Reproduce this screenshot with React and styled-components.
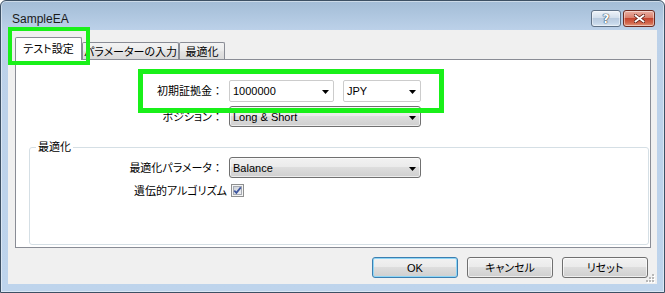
import styled, { createGlobalStyle } from "styled-components";

const GlobalStyle = createGlobalStyle`
  html, body {
    margin: 0;
    padding: 0;
    background: #ffffff;
  }
  body {
    font-family: "Liberation Sans", "Noto Sans CJK JP", sans-serif;
    font-size: 11px;
    color: #000;
  }
  * {
    box-sizing: border-box;
  }
`;

const Window = styled.div`
  position: relative;
  width: 665px;
  height: 293px;
  border: 1px solid #3d5064;
  border-radius: 6px 6px 0 0;
  background: linear-gradient(
    to bottom,
    #a3bcd6 0px,
    #adc5de 12px,
    #bcd1e9 29px,
    #bed4ec 100%
  );
  box-shadow: inset 0 0 0 1px rgba(255, 255, 255, 0.45);
  display: flex;
  flex-direction: column;
  overflow: hidden;
`;

const TitleBar = styled.div`
  height: 29px;
  flex: none;
  display: flex;
  align-items: flex-start;
  padding: 0 9px 0 11px;
`;

const Title = styled.div`
  flex: 1;
  margin-top: 11px;
  font-size: 12px;
  line-height: 14px;
  color: #1b1b1b;
`;

const CaptionButtons = styled.div`
  display: flex;
  gap: 2px;
  margin-top: 9px;
`;

const CaptionButton = styled.div`
  width: ${(p) => p.$width}px;
  height: 17px;
  border: 1px solid ${(p) => (p.$close ? "#6b2b22" : "#5f7186")};
  border-radius: 3px;
  display: flex;
  align-items: center;
  justify-content: center;
  background: ${(p) =>
    p.$close
      ? "linear-gradient(to bottom, #eab0a3 0%, #d9806d 45%, #c5452f 50%, #d2664c 80%, #e39a7e 100%)"
      : "linear-gradient(to bottom, #eef3f9 0%, #d3dfec 45%, #b9cbdf 50%, #c5d6e9 80%, #d9e6f3 100%)"};
  box-shadow: inset 0 0 0 1px rgba(255, 255, 255, 0.45);
`;

const HelpGlyph = styled.span`
  font-family: "DejaVu Sans", sans-serif;
  font-weight: bold;
  font-size: 12px;
  line-height: 12px;
  color: #ffffff;
  text-shadow: 0 0 1px #2f4052, 0 0 1px #2f4052, 0 0 1px #2f4052;
`;

const Client = styled.div`
  position: relative;
  flex: 1;
  margin: 0 7px 8px;
  background: #f0f0f0;
  display: flex;
  flex-direction: column;
  padding: 7px 6px 6px 7px;
`;

const TabStrip = styled.div`
  position: relative;
  z-index: 1;
  height: 22px;
  flex: none;
  display: flex;
  align-items: flex-end;
`;

const Tab = styled.div`
  width: ${(p) => p.$width}px;
  height: ${(p) => (p.$active ? 23 : 17)}px;
  margin-bottom: ${(p) => (p.$active ? -1 : 0)}px;
  border: 1px solid #898c95;
  border-bottom: none;
  border-radius: 2px 2px 0 0;
  background: ${(p) =>
    p.$active
      ? "#ffffff"
      : "linear-gradient(to bottom, #f3f3f3 0%, #ececec 45%, #e2e2e2 55%, #dadada 100%)"};
  display: flex;
  align-items: center;
  justify-content: center;
  white-space: nowrap;
  font-feature-settings: "palt";
  line-height: 14px;
  padding-top: ${(p) => (p.$active ? 0 : 1)}px;
`;

const Panel = styled.div`
  height: 189px;
  flex: none;
  border: 1px solid #898c95;
  background: #ffffff;
  display: flex;
  flex-direction: column;
  padding-top: 20px;
`;

const Row = styled.div`
  display: flex;
  align-items: center;
  gap: ${(p) => p.$gap ?? 6}px;
  height: ${(p) => p.$h}px;
  margin-top: ${(p) => p.$mt || 0}px;
  flex: none;
`;

const Label = styled.div`
  width: ${(p) => p.$w}px;
  flex: none;
  text-align: right;
  white-space: nowrap;
  font-feature-settings: "palt";
  line-height: 14px;
`;

const Colon = styled.span`
  font-feature-settings: normal;
`;

const Combo = styled.div`
  width: ${(p) => p.$w}px;
  height: ${(p) => p.$h}px;
  margin-left: ${(p) => p.$ml || 0}px;
  flex: none;
  display: flex;
  align-items: center;
  justify-content: space-between;
  padding: 0 4px 0 3px;
  border: 1px solid ${(p) => (p.$flat ? "#cccccc" : "#707070")};
  border-radius: ${(p) => (p.$flat ? 2 : 3)}px;
  background: ${(p) =>
    p.$flat
      ? "#ffffff"
      : "linear-gradient(to bottom, #f2f2f2 0%, #ebebeb 45%, #dddddd 50%, #cfcfcf 100%)"};
  box-shadow: ${(p) =>
    p.$flat ? "none" : "inset 0 0 0 1px rgba(255, 255, 255, 0.6)"};
  line-height: 14px;
`;

const Arrow = styled.svg`
  flex: none;
  margin-top: 2px;
`;

const GroupBox = styled.fieldset`
  flex: 1;
  min-width: 0;
  margin: 13px 1px 2px 13px;
  padding: 3px 0 0;
  border: 1px solid #d5dfe5;
  border-radius: 3px;
  display: flex;
  flex-direction: column;
`;

const Legend = styled.legend`
  margin-left: 6px;
  padding: 0 2px;
  line-height: 14px;
  font-size: 11px;
  font-feature-settings: "palt";
`;

const CheckBox = styled.svg`
  flex: none;
  display: block;
`;

const ButtonRow = styled.div`
  flex: none;
  display: flex;
  justify-content: flex-end;
  gap: 9px;
  margin-top: 9px;
  padding-right: 3px;
`;

const Button = styled.div`
  width: 86px;
  height: 21px;
  border: 1px solid ${(p) => (p.$default ? "#3c7fb1" : "#707070")};
  border-radius: 3px;
  background: linear-gradient(
    to bottom,
    #f2f2f2 0%,
    #ebebeb 45%,
    #dddddd 50%,
    #cfcfcf 100%
  );
  box-shadow: ${(p) =>
    p.$default
      ? "inset 0 0 0 1px #8fd6f6"
      : "inset 0 0 0 1px rgba(255, 255, 255, 0.65)"};
  display: flex;
  align-items: center;
  justify-content: center;
  font-feature-settings: "palt";
  line-height: 14px;
`;

const Grip = styled.svg`
  position: absolute;
  right: 2px;
  bottom: 1px;
`;

const Highlight = styled.div`
  position: absolute;
  left: ${(p) => p.$x}px;
  top: ${(p) => p.$y}px;
  width: ${(p) => p.$w}px;
  height: ${(p) => p.$h}px;
  border: ${(p) => p.$t}px solid #19f019;
  pointer-events: none;
  z-index: 5;
`;

const DownArrow = () => (
  <Arrow width="7" height="4" viewBox="0 0 7 4">
    <polygon points="0,0 7,0 3.5,4" fill="#000" />
  </Arrow>
);

const Combobox = ({ value, w, h, flat, ml }) => (
  <Combo $w={w} $h={h} $flat={flat} $ml={ml}>
    <span>{value}</span>
    <DownArrow />
  </Combo>
);

const CheckedBox = () => (
  <CheckBox width="13" height="13" viewBox="0 0 13 13">
    <defs>
      <linearGradient id="cbFill" x1="0" y1="0" x2="1" y2="1">
        <stop offset="0" stopColor="#c9ced6" />
        <stop offset="1" stopColor="#f3f4f6" />
      </linearGradient>
    </defs>
    <rect x="0.5" y="0.5" width="12" height="12" fill="#f4f4f4" stroke="#8e8f8f" />
    <rect x="2.5" y="2.5" width="8" height="8" fill="url(#cbFill)" stroke="#a7abb2" strokeWidth="1" />
    <path d="M3.3 6.6 L5.4 8.9 L9.8 3.4" fill="none" stroke="#3f57a0" strokeWidth="1.7" />
  </CheckBox>
);

const CloseGlyph = () => (
  <svg width="11" height="9" viewBox="0 0 11 9">
    <path d="M1.5 1.5 L9.5 7.5 M9.5 1.5 L1.5 7.5" stroke="#5a1d14" strokeWidth="3.4" strokeLinecap="square" />
    <path d="M1.5 1.5 L9.5 7.5 M9.5 1.5 L1.5 7.5" stroke="#ffffff" strokeWidth="1.8" strokeLinecap="square" />
  </svg>
);

export default function App() {
  return (
    <>
      <GlobalStyle />
      <Window>
        <TitleBar>
          <Title>SampleEA</Title>
          <CaptionButtons>
            <CaptionButton $width={30}>
              <HelpGlyph>?</HelpGlyph>
            </CaptionButton>
            <CaptionButton $width={32} $close>
              <CloseGlyph />
            </CaptionButton>
          </CaptionButtons>
        </TitleBar>

        <Client>
          <TabStrip>
            <Tab $width={67} $active>
              テスト設定
            </Tab>
            <Tab $width={97}>パラメーターの入力</Tab>
            <Tab $width={46}>最適化</Tab>
          </TabStrip>

          <Panel>
            <Row $h={22}>
              <Label $w={207}>
                初期証拠金<Colon>：</Colon>
              </Label>
              <Combobox value="1000000" w={105} h={22} flat />
              <Combobox value="JPY" w={78} h={22} flat ml={3} />
            </Row>
            <Row $h={21} $mt={4}>
              <Label $w={207}>
                ポジション<Colon>：</Colon>
              </Label>
              <Combobox value="Long & Short" w={192} h={21} />
            </Row>

            <GroupBox>
              <Legend>最適化</Legend>
              <Row $h={21}>
                <Label $w={193}>
                  最適化パラメータ<Colon>：</Colon>
                </Label>
                <Combobox value="Balance" w={192} h={21} />
              </Row>
              <Row $h={13} $mt={6} $gap={4}>
                <Label $w={197}>遺伝的アルゴリズム</Label>
                <CheckedBox />
              </Row>
            </GroupBox>
          </Panel>

          <ButtonRow>
            <Button $default>OK</Button>
            <Button>キャンセル</Button>
            <Button>リセット</Button>
          </ButtonRow>

          <Grip width="9" height="9" viewBox="0 0 9 9">
            {[
              [6, 0],
              [3, 3],
              [6, 3],
              [0, 6],
              [3, 6],
              [6, 6],
            ].map(([x, y]) => (
              <g key={`${x}-${y}`}>
                <rect x={x + 1} y={y + 1} width="2" height="2" fill="#ffffff" />
                <rect x={x} y={y} width="2" height="2" fill="#b8b8b8" />
              </g>
            ))}
          </Grip>
        </Client>

        <Highlight $x={7} $y={26} $w={82} $h={38} $t={4} />
        <Highlight $x={137} $y={68} $w={306} $h={44} $t={5} />
      </Window>
    </>
  );
}
